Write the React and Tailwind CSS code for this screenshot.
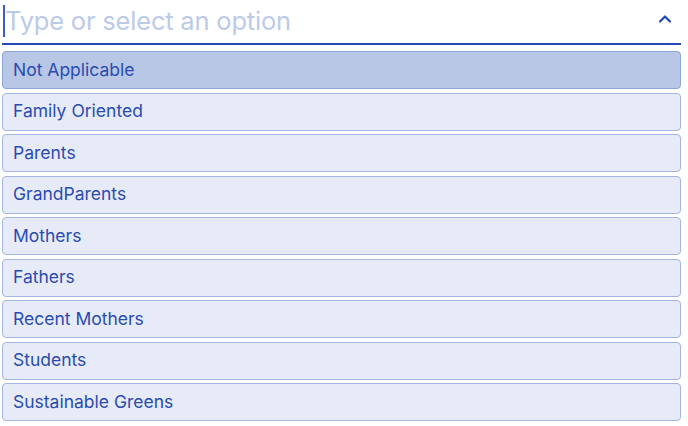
import React from "react";

const options = [
  "Not Applicable",
  "Family Oriented",
  "Parents",
  "GrandParents",
  "Mothers",
  "Fathers",
  "Recent Mothers",
  "Students",
  "Sustainable Greens",
];

export default function App() {
  return (
    <div
      className="w-[688px] h-[426px] bg-white overflow-hidden"
      style={{ fontFamily: "Inter, 'Noto Sans', sans-serif" }}
    >
      <div className="ml-[2px] w-[679px]">
        <div className="relative h-[45px] flex items-center border-b-2 border-[#2448b8]">
          <div className="absolute left-[1px] top-[5px] w-[2px] h-[32px] bg-[#3a5cc4]" />
          <span className="ml-[3px] -mt-[2px] text-[25.5px] leading-none text-[#bccaea] tracking-[-0.2px] font-normal">
            Type or select an option
          </span>
          <svg
            className="absolute right-[9px] top-[14px]"
            width="14"
            height="10"
            viewBox="0 0 14 10"
          >
            <path
              d="M2 7.5 L7 2.5 L12 7.5"
              fill="none"
              stroke="#2448b8"
              strokeWidth="2.2"
              strokeLinecap="round"
              strokeLinejoin="round"
            />
          </svg>
        </div>
        <div className="mt-[6px] flex flex-col gap-[3.5px]">
          {options.map((o, i) => (
            <div
              key={o}
              className={
                "h-[38px] rounded-[4px] border flex items-center pl-[10px] text-[17.5px] text-[#2a4cb0] " +
                (i === 0
                  ? "bg-[#b8c7e5] border-[#8ea5d8]"
                  : "bg-[#e7ebf7] border-[#a4b6e0]")
              }
            >
              {o}
            </div>
          ))}
        </div>
      </div>
    </div>
  );
}
